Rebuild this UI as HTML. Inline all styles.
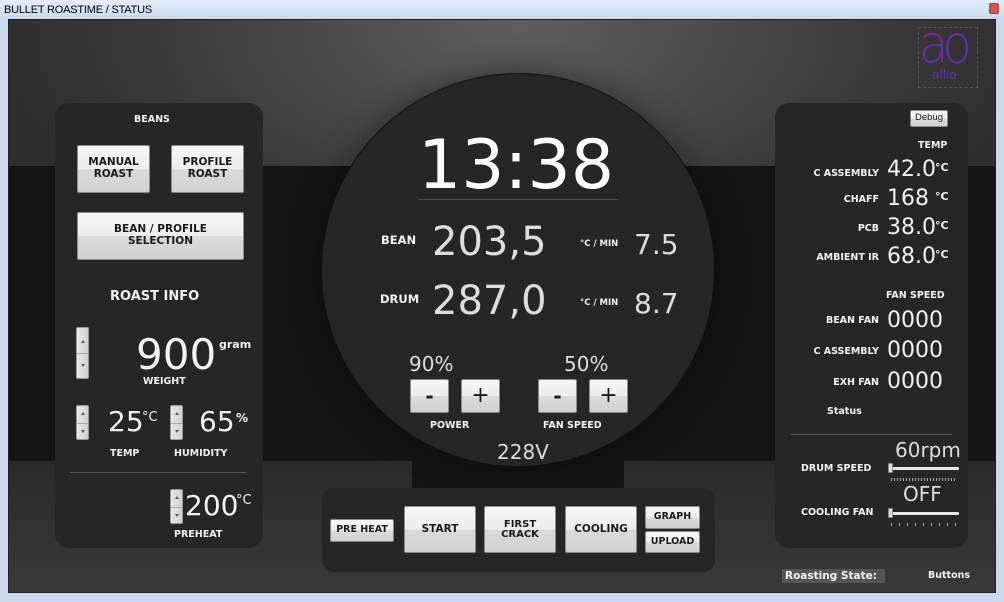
<!DOCTYPE html>
<html><head><style>
*{margin:0;padding:0;box-sizing:border-box}
body{width:1004px;height:602px;overflow:hidden;background:#c9d9ee;font-family:"DejaVu Sans","Liberation Sans",sans-serif;position:relative}
.a{position:absolute}
.title{left:0;top:0;width:1004px;height:19px;background:linear-gradient(#e4edf8,#c7d8ee);font:11px "Liberation Sans",sans-serif;color:#000;padding:4px 0 0 4px;letter-spacing:-0.2px}
.main{left:8px;top:19px;width:988px;height:574px;background:radial-gradient(ellipse 520px 260px at 510px 10px,#5e5e5e,#3a3a3a 70%,#2e2e2e);border:1px solid #222;overflow:hidden}
.band{left:0;top:146px;width:988px;height:295px;background:#141414}
.low{left:0;top:441px;width:988px;height:140px;background:linear-gradient(#2a2a2a,#3a3a3a)}
.panel{background:#262626;border-radius:14px}
.lbl{color:#f2f2f2;font-weight:bold;font-size:9.5px;white-space:nowrap}
.num{color:#f2f2f2;white-space:nowrap;line-height:1}
.btn{background:linear-gradient(#f7f7f7 0%,#ececec 50%,#dadada 51%,#d2d2d2 100%);border:1px solid #8a8a8a;border-radius:2px;color:#1a1a1a;font-weight:bold;font-size:10.5px;display:flex;align-items:center;justify-content:center;text-align:center;line-height:1.1}
.spin{background:linear-gradient(90deg,#e8e8e8,#d0d0d0);border:1px solid #999;border-radius:2px}
.spin:after{content:"";position:absolute;left:0;right:0;top:50%;border-top:1px solid #aaa}
.spin i{position:absolute;left:50%;width:0;height:0;border-left:2px solid transparent;border-right:2px solid transparent;margin-left:-2px}
.sl{height:3px;background:#e8e8e8;border-radius:1px}
.knob{width:5px;height:10px;background:#ddd;border:1px solid #888;border-radius:1px}
.ticks{height:3px;background:repeating-linear-gradient(90deg,#aaa 0 1px,transparent 1px 8px)}
</style></head><body>
<div class="a title">BULLET ROASTIME / STATUS</div>
<div class="a" style="left:989px;top:3px;width:10px;height:11px;background:#d9534f;border:1px solid #944;border-radius:2px"></div>
<div class="a main">
 <div class="a band"></div>
 <div class="a low"></div>
</div>
<!-- logo -->
<div class="a" style="left:918px;top:27px;width:60px;height:61px;border:1px dashed #555"></div>
<div class="a" style="left:919px;top:21px;font:300 48px 'DejaVu Sans',sans-serif;color:#6a2fa8;letter-spacing:-6px;line-height:1;transform:scaleY(1.1)">ao</div>
<div class="a" style="left:932px;top:69px;font:12px 'DejaVu Sans',sans-serif;color:#6a2fa8;line-height:1">allio</div>

<!-- left panel -->
<div class="a panel" style="left:55px;top:103px;width:208px;height:445px"></div>
<div class="a lbl" style="left:134px;top:114px">BEANS</div>
<div class="a btn" style="left:77px;top:145px;width:73px;height:48px">MANUAL<br>ROAST</div>
<div class="a btn" style="left:171px;top:145px;width:73px;height:48px">PROFILE<br>ROAST</div>
<div class="a btn" style="left:77px;top:212px;width:167px;height:48px">BEAN / PROFILE<br>SELECTION</div>
<div class="a lbl" style="left:110px;top:289px;font-size:13px">ROAST INFO</div>
<div class="a spin" style="left:76px;top:327px;width:13px;height:52px"><i style="top:12px;border-bottom:3px solid #557"></i><i style="top:36px;border-top:3px solid #557"></i></div>
<div class="a num" style="left:136px;top:334px;font-size:42px">900</div>
<div class="a lbl" style="left:219px;top:338px;font-size:11px">gram</div>
<div class="a lbl" style="left:143px;top:376px">WEIGHT</div>
<div class="a spin" style="left:76px;top:405px;width:13px;height:35px"><i style="top:6px;border-bottom:3px solid #557"></i><i style="top:24px;border-top:3px solid #557"></i></div>
<div class="a num" style="left:108px;top:408px;font-size:28px">25</div>
<div class="a lbl" style="left:142px;top:410px;font-size:13px;font-weight:normal">°C</div>
<div class="a spin" style="left:170px;top:405px;width:13px;height:35px"><i style="top:6px;border-bottom:3px solid #557"></i><i style="top:24px;border-top:3px solid #557"></i></div>
<div class="a num" style="left:199px;top:408px;font-size:28px">65</div>
<div class="a lbl" style="left:236px;top:411px;font-size:12px">%</div>
<div class="a lbl" style="left:110px;top:448px">TEMP</div>
<div class="a lbl" style="left:174px;top:448px">HUMIDITY</div>
<div class="a" style="left:70px;top:472px;width:176px;height:1px;background:#555"></div>
<div class="a spin" style="left:170px;top:489px;width:13px;height:35px"><i style="top:6px;border-bottom:3px solid #557"></i><i style="top:24px;border-top:3px solid #557"></i></div>
<div class="a num" style="left:185px;top:492px;font-size:28px">200</div>
<div class="a lbl" style="left:236px;top:493px;font-size:13px;font-weight:normal">°C</div>
<div class="a lbl" style="left:174px;top:529px">PREHEAT</div>

<!-- circle -->
<div class="a" style="left:412px;top:440px;width:212px;height:48px;background:#141414"></div>
<div class="a" style="left:321px;top:73px;width:394px;height:394px;border-radius:50%;background:#262626;border:1px solid #111;box-shadow:0 0 30px rgba(0,0,0,.4)"></div>
<div class="a num" style="left:418px;top:132px;font-size:68px;color:#fff">13:38</div>
<div class="a" style="left:418px;top:199px;width:200px;height:1px;background:#4a4a4a"></div>
<div class="a lbl" style="left:381px;top:233px;font-size:11.5px">BEAN</div>
<div class="a num" style="left:432px;top:222px;font-size:40px;color:#ddd">203,5</div>
<div class="a lbl" style="left:580px;top:239px;font-size:8.5px">°C / MIN</div>
<div class="a num" style="left:634px;top:231px;font-size:28px;color:#ddd">7.5</div>
<div class="a lbl" style="left:380px;top:292px;font-size:11.5px">DRUM</div>
<div class="a num" style="left:432px;top:281px;font-size:40px;color:#ddd">287,0</div>
<div class="a lbl" style="left:580px;top:298px;font-size:8.5px">°C / MIN</div>
<div class="a num" style="left:634px;top:290px;font-size:28px;color:#ddd">8.7</div>
<div class="a num" style="left:409px;top:354px;font-size:20px;color:#ddd">90%</div>
<div class="a num" style="left:564px;top:354px;font-size:20px;color:#ddd">50%</div>
<div class="a btn" style="left:410px;top:379px;width:39px;height:34px;font-size:20px">-</div>
<div class="a btn" style="left:461px;top:379px;width:39px;height:34px;font-size:22px;font-weight:normal">+</div>
<div class="a btn" style="left:538px;top:379px;width:39px;height:34px;font-size:20px">-</div>
<div class="a btn" style="left:589px;top:379px;width:39px;height:34px;font-size:22px;font-weight:normal">+</div>
<div class="a lbl" style="left:430px;top:420px">POWER</div>
<div class="a lbl" style="left:543px;top:420px">FAN SPEED</div>
<div class="a num" style="left:497px;top:442px;font-size:20px;color:#ddd">228V</div>

<!-- bottom panel -->
<div class="a panel" style="left:322px;top:488px;width:393px;height:84px;border-radius:12px"></div>
<div class="a btn" style="left:330px;top:519px;width:64px;height:23px;font-size:9.5px">PRE HEAT</div>
<div class="a btn" style="left:404px;top:506px;width:72px;height:47px">START</div>
<div class="a btn" style="left:484px;top:506px;width:72px;height:47px;font-size:10px;line-height:1">FIRST<br>CRACK</div>
<div class="a btn" style="left:565px;top:506px;width:72px;height:47px">COOLING</div>
<div class="a btn" style="left:645px;top:506px;width:55px;height:23px;font-size:9.5px">GRAPH</div>
<div class="a btn" style="left:645px;top:531px;width:55px;height:22px;font-size:9.5px">UPLOAD</div>

<!-- right panel -->
<div class="a panel" style="left:775px;top:103px;width:193px;height:445px"></div>
<div class="a btn" style="left:910px;top:110px;width:38px;height:17px;font-weight:normal;font-size:9.5px;font-family:'Liberation Sans',sans-serif">Debug</div>
<div class="a lbl" style="left:918px;top:140px">TEMP</div>
<div class="a lbl" style="left:778px;top:168px;width:101px;text-align:right">C ASSEMBLY</div>
<div class="a num" style="left:887px;top:159px;font-size:22px">42.0</div>
<div class="a lbl" style="left:935px;top:161px;font-size:11px">°C</div>
<div class="a lbl" style="left:778px;top:194px;width:101px;text-align:right">CHAFF</div>
<div class="a num" style="left:887px;top:188px;font-size:22px">168</div>
<div class="a lbl" style="left:935px;top:190px;font-size:11px">°C</div>
<div class="a lbl" style="left:778px;top:223px;width:101px;text-align:right">PCB</div>
<div class="a num" style="left:887px;top:217px;font-size:22px">38.0</div>
<div class="a lbl" style="left:935px;top:219px;font-size:11px">°C</div>
<div class="a lbl" style="left:778px;top:252px;width:101px;text-align:right">AMBIENT IR</div>
<div class="a num" style="left:887px;top:246px;font-size:22px">68.0</div>
<div class="a lbl" style="left:935px;top:248px;font-size:11px">°C</div>
<div class="a lbl" style="left:886px;top:290px">FAN SPEED</div>
<div class="a lbl" style="left:778px;top:315px;width:101px;text-align:right">BEAN FAN</div>
<div class="a num" style="left:887px;top:310px;font-size:22px">0000</div>
<div class="a lbl" style="left:778px;top:346px;width:101px;text-align:right">C ASSEMBLY</div>
<div class="a num" style="left:887px;top:340px;font-size:22px">0000</div>
<div class="a lbl" style="left:778px;top:377px;width:101px;text-align:right">EXH FAN</div>
<div class="a num" style="left:887px;top:371px;font-size:22px">0000</div>
<div class="a lbl" style="left:827px;top:406px">Status</div>
<div class="a" style="left:791px;top:434px;width:161px;height:1px;background:#555"></div>
<div class="a num" style="left:895px;top:440px;font-size:20px;color:#ddd">60rpm</div>
<div class="a lbl" style="left:801px;top:463px">DRUM SPEED</div>
<div class="a sl" style="left:889px;top:467px;width:70px"></div>
<div class="a knob" style="left:888px;top:463px"></div>
<div class="a ticks" style="left:891px;top:478px;width:65px;background:repeating-linear-gradient(90deg,#aaa 0 1px,transparent 1px 3px)"></div>
<div class="a num" style="left:903px;top:484px;font-size:20px;color:#ddd">OFF</div>
<div class="a lbl" style="left:801px;top:507px">COOLING FAN</div>
<div class="a sl" style="left:889px;top:512px;width:70px"></div>
<div class="a knob" style="left:888px;top:508px"></div>
<div class="a ticks" style="left:891px;top:523px;width:65px"></div>
<div class="a lbl" style="left:782px;top:569px;width:103px;height:14px;background:#555;padding:1px 0 0 3px;font-size:10.5px">Roasting State:</div>
<div class="a lbl" style="left:928px;top:570px">Buttons</div>
</body></html>
